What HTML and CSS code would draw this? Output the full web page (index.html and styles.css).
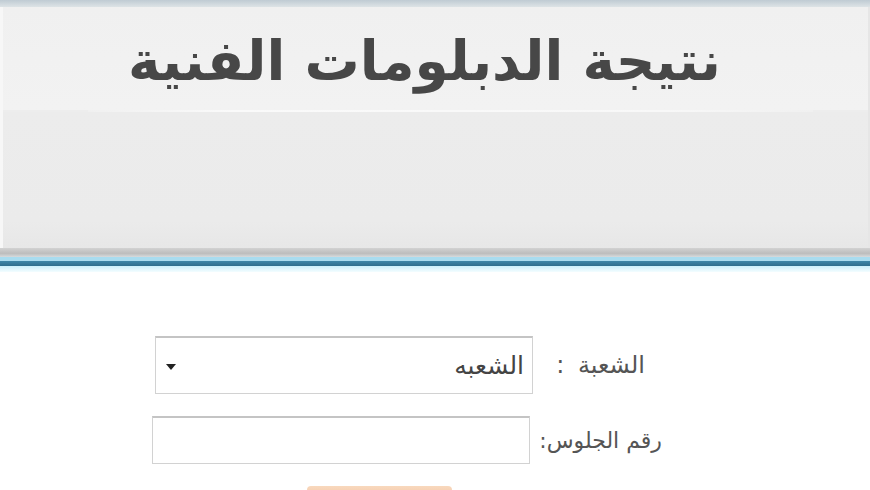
FILE: index.html
```html
<!DOCTYPE html>
<html lang="ar" dir="rtl">
<head>
<meta charset="utf-8">
<title>نتيجة الدبلومات الفنية</title>
<link rel="stylesheet" href="styles.css">
</head>
<body>
<header class="header">
  <div class="top-strip"></div>
  <div class="panel">
    <div class="panel-upper">
      <h1 class="title">نتيجة الدبلومات الفنية</h1>
    </div>
    <div class="divider"></div>
    <div class="panel-lower"></div>
  </div>
  <div class="shadow-band"></div>
  <div class="line-light"></div>
  <div class="line-dark"></div>
  <div class="line-glow"></div>
</header>
<main class="form">
  <div class="row row-branch">
    <label class="label label-branch">الشعبة :</label>
    <div class="select-wrap">
      <select class="select">
        <option>الشعبه</option>
      </select>
      <span class="arrow"></span>
    </div>
  </div>
  <div class="row row-seat">
    <label class="label label-seat">رقم الجلوس:</label>
    <input class="input" type="text">
  </div>
  <div class="row row-btn">
    <button class="btn" type="button"></button>
  </div>
</main>
</body>
</html>
```
FILE: styles.css
```css
html, body {
  margin: 0;
  padding: 0;
  background: #ffffff;
  font-family: "DejaVu Sans", "Noto Sans", sans-serif;
  overflow: hidden;
}
.header {
  display: flex;
  flex-direction: column;
}
.top-strip {
  height: 7px;
  background: linear-gradient(#bfcbd3, #dde3e6);
}
.panel {
  display: flex;
  flex-direction: column;
  background: #ededed;
  border-left: 3px solid #f7f7f7;
  border-right: 2px solid #e6e6e6;
}
.panel-upper {
  height: 103px;
  background: linear-gradient(#f0f0f0, #f2f2f2);
  display: flex;
  justify-content: center;
}
.divider {
  height: 2px;
  margin: 0 55px 0 85px;
  background: linear-gradient(90deg, #f0f0f0, #fafafa 20%, #f8f8f8 80%, #f0f0f0);
}
.panel-lower {
  height: 136px;
  background: linear-gradient(#ececec, #ebebeb 80%, #e7e7e7);
}
.title {
  margin: 17px 0 0 -22px;
  font-size: 55px;
  font-weight: bold;
  color: #474747;
  line-height: 74px;
}
.shadow-band {
  height: 9px;
  background: linear-gradient(#d2d2d2, #bdbdbd 60%, #d7dbdd);
}
.line-light {
  height: 4px;
  background: #a9dcef;
}
.line-dark {
  height: 5px;
  background: linear-gradient(#3c86a8, #2e6f8e);
}
.line-glow {
  height: 6px;
  background: linear-gradient(#c9f0fb, #f4fdff);
}
.form {
  display: flex;
  flex-direction: column;
  padding-top: 64px;
}
.row {
  display: flex;
  align-items: center;
}
.row-branch {
  padding-right: 225px;
  gap: 14px;
}
.row-seat {
  margin-top: 22px;
  padding-right: 208px;
  gap: 8px;
}
.row-btn {
  margin-top: 22px;
  padding-right: 418px;
}
.label {
  font-size: 24px;
  color: #555555;
  white-space: nowrap;
}
.label-branch {
  width: 98px;
  word-spacing: 6px;
}
.label-seat {
  width: 124px;
  font-size: 22px;
}
.select-wrap {
  position: relative;
  width: 378px;
  height: 58px;
}
.select {
  appearance: none;
  -webkit-appearance: none;
  width: 100%;
  height: 100%;
  box-sizing: border-box;
  border: 1px solid #d2d2d2;
  border-top: 2px solid #c4c4c4;
  background: #ffffff;
  font-family: "DejaVu Sans", sans-serif;
  font-size: 25px;
  color: #444444;
  padding: 0 8px 0 0;
  border-radius: 0;
}
.arrow {
  position: absolute;
  left: 11px;
  top: 28px;
  width: 0;
  height: 0;
  border-left: 5px solid transparent;
  border-right: 5px solid transparent;
  border-top: 6px solid #222222;
}
.input {
  width: 378px;
  height: 48px;
  box-sizing: border-box;
  border: 1px solid #d2d2d2;
  border-top: 2px solid #c4c4c4;
  background: #ffffff;
  margin: 0;
}
.btn {
  width: 145px;
  height: 40px;
  border: none;
  border-radius: 4px;
  background: linear-gradient(#f8d8bd, #f0a070);
}
```
